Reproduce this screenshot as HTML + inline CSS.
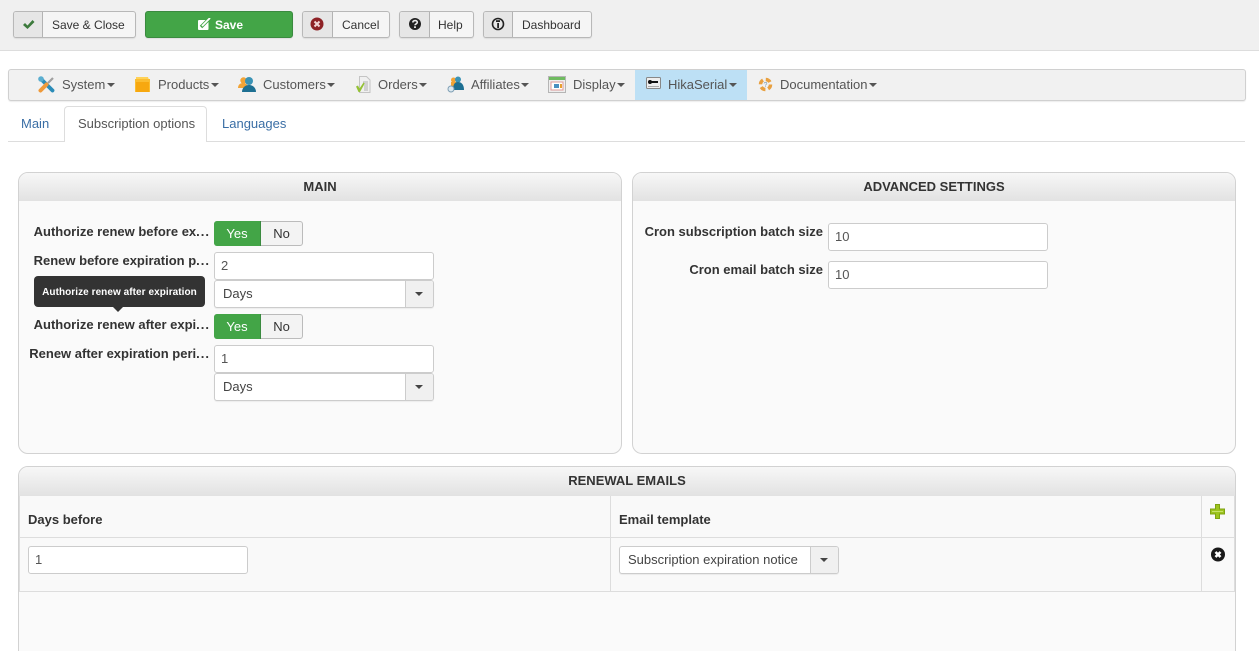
<!DOCTYPE html>
<html lang="en"><head><meta charset="utf-8"><title>Subscription options</title>
<style>
html,body{margin:0;padding:0;width:1259px;height:651px;overflow:hidden;background:#fff;font-family:"Liberation Sans",Arial,sans-serif;font-size:12px;color:#333}
#w{position:relative;width:1259px;height:651px;overflow:hidden;background:#fff}
.a{position:absolute;box-sizing:border-box}
.t{position:absolute;white-space:nowrap;line-height:16px}
.btn{position:absolute;box-sizing:border-box;top:11px;height:27px;background:#f5f5f5;border:1px solid #b8b8b8;border-radius:3px;box-shadow:0 1px 1px rgba(0,0,0,.08)}
.btn .ic{position:absolute;left:0;top:0;bottom:0;background:#e6e6e6;border-right:1px solid #b3b3b3;border-radius:2px 0 0 2px}
.btn .t{top:5px;color:#333}
.btn svg{position:absolute}
.m{position:absolute;top:77px;line-height:16px;font-size:13px;color:#555;white-space:nowrap}
.m i{display:inline-block;width:0;height:0;border:4px solid transparent;border-top-color:#555;border-bottom:0;margin-left:1.500px;vertical-align:2px}
.mi{position:absolute}
.panel{position:absolute;box-sizing:border-box;background:#fafafa;border:1px solid #d2d2d2;border-radius:10px}
.panel .h{position:absolute;left:0;right:0;top:0;height:28px;border-radius:9px 9px 0 0;background:linear-gradient(#f7f7f7,#e2e2e2);text-align:center;font-weight:bold;font-size:13px;line-height:27px;color:#333}
.l{position:absolute;white-space:nowrap;font-weight:bold;font-size:13px;line-height:16px;color:#333;text-align:right}
.l s{text-decoration:none;letter-spacing:1px;margin-right:-1px}
.inp{position:absolute;box-sizing:border-box;background:#fff;border:1px solid #ccc;border-radius:3px;width:220px;height:28px;padding:5px 6px;line-height:16px;color:#555;font-size:13px}
.sel{position:absolute;box-sizing:border-box;background:#fff;border:1px solid #ccc;border-radius:3px;width:220px;height:28px;padding:5px 8px;line-height:16px;color:#444;font-size:13px;box-shadow:0 1px 1px rgba(0,0,0,.06)}
.sel b{position:absolute;right:0;top:0;bottom:0;width:27px;background:#f0f0f0;border-left:1px solid #ccc;border-radius:0 2px 2px 0}
.sel b:after{content:"";position:absolute;left:9px;top:11px;border:4px solid transparent;border-top-color:#444;border-bottom:0}
.yn{position:absolute;box-sizing:border-box;left:214px;width:89px;height:25px;border:1px solid #bbb;border-radius:3px;background:#f3f3f3;font-size:13px;line-height:23px}
.yn span{position:absolute;top:0;text-align:center}
.yn .y{left:-1px;top:-1px;height:25px;line-height:25px;width:47px;background:#43a547;color:#fff;border-radius:3px 0 0 3px;border-right:1px solid #3a8a3f;box-sizing:border-box}
.yn .n{left:46px;width:41px;color:#333;line-height:25px;top:-1px}
</style></head><body><div id="w">

<div class="a" style="left:0;top:0;width:1259px;height:51px;background:#f0f0f0;border-bottom:1px solid #ddd"></div>

<div class="btn" style="left:13px;width:123px"><span class="ic" style="width:28px"><svg style="left:8px;top:7px" width="13" height="11" viewBox="0 0 13 11"><path d="M1 6l2-2 2.500 2.500L10.500 1 12.500 3 5.500 10z" fill="#3c7a3c"/></svg></span><span class="t" style="left:38px">Save &amp; Close</span></div>

<div class="btn" style="left:145px;width:148px;background:#43a547;border-color:#3a8a3f"><svg style="left:52px;top:6px" width="14" height="14" viewBox="0 0 14 14"><rect x="0" y="2" width="10.500" height="10" rx="1" fill="#fff"/><path d="M3 9 11.500 .5" stroke="#43a547" stroke-width="3.400" fill="none"/><path d="M4 8 12 0" stroke="#fff" stroke-width="1.800" fill="none"/></svg><span class="t" style="left:69px;color:#fff;font-weight:bold">Save</span></div>

<div class="btn" style="left:302px;width:88px"><span class="ic" style="width:29px"><svg style="left:7px;top:5px" width="14" height="14" viewBox="0 0 14 14"><circle cx="7" cy="7" r="6.500" fill="#8e2226"/><path d="M4.500 4.500l5 5M9.500 4.500l-5 5" stroke="#f3d6d6" stroke-width="2"/></svg></span><span class="t" style="left:39px">Cancel</span></div>

<div class="btn" style="left:399px;width:75px"><span class="ic" style="width:29px"><svg style="left:8px;top:5px" width="14" height="14" viewBox="0 0 14 14"><circle cx="7" cy="7" r="6" fill="#222"/><path d="M4.800 5.500C5 3 9.300 3 9.300 5.300 9.300 7 7 6.800 7 8.300" stroke="#eee" stroke-width="1.600" fill="none"/><rect x="6.100" y="9.300" width="1.800" height="1.700" fill="#eee"/></svg></span><span class="t" style="left:38px">Help</span></div>

<div class="btn" style="left:483px;width:109px"><span class="ic" style="width:28px"><svg style="left:7px;top:5px" width="14" height="14" viewBox="0 0 14 14"><circle cx="7" cy="7" r="5.500" fill="none" stroke="#222" stroke-width="1.600"/><rect x="6.200" y="6" width="1.800" height="5" fill="#222"/><rect x="5" y="3.200" width="4" height="1.800" fill="#222"/></svg></span><span class="t" style="left:38px">Dashboard</span></div>

<div class="a" style="left:8px;top:69px;width:1238px;height:32px;background:#f1f1f1;border:1px solid #d0d0d0;border-radius:3px;box-shadow:0 1px 1px rgba(0,0,0,.08)"></div>
<div class="a" style="left:635px;top:70px;width:112px;height:30px;background:#bde0f5"></div>

<svg class="mi" style="left:38px;top:76px" width="18" height="17" viewBox="0 0 18 17"><path d="M10 7 15 2" stroke="#a0a0a0" stroke-width="2.200" fill="none"/><path d="M3 3 14.500 14.500" stroke="#2b8cb8" stroke-width="3.800" stroke-linecap="round" fill="none"/><circle cx="3" cy="3" r="2.800" fill="#5aaed0"/><path d="M2.500 14.500 8.500 8.500" stroke="#ef9a3a" stroke-width="4" stroke-linecap="round" fill="none"/></svg>
<span class="m" style="left:62px">System<i></i></span>

<svg class="mi" style="left:134px;top:76px" width="17" height="16" viewBox="0 0 17 16"><path d="M2 1h12l1 3H2z" fill="#ffd257"/><rect x="1" y="3" width="15" height="13" fill="#fbbd30"/><rect x="2" y="6" width="13" height="10" fill="#f7a80f"/></svg>
<span class="m" style="left:158px">Products<i></i></span>

<svg class="mi" style="left:238px;top:76px" width="18" height="16" viewBox="0 0 18 16"><circle cx="5.500" cy="4.500" r="3.200" fill="#f2a436"/><path d="M0 12c0-3 2-5 5-5s5 2 5 5z" fill="#f2a436"/><circle cx="11" cy="5" r="4" fill="#3a93b5"/><path d="M4 16c0-4 3-7 7-7s7 3 7 7z" fill="#1d6f92"/></svg>
<span class="m" style="left:263px">Customers<i></i></span>

<svg class="mi" style="left:355px;top:76px" width="17" height="17" viewBox="0 0 17 17"><path d="M4.500 .5h7l3.500 3.500v12.500H4.500z" fill="#f0f0f0" stroke="#c4c4c4"/><path d="M8 6h5M8 8h5M9 10h4M9 12h4M9 14h4" stroke="#b0b0b0"/><path d="M1 10.500l2-1 1.500 3 4-6 1.200 1L5 16H3.500z" fill="#94c135"/></svg>
<span class="m" style="left:378px">Orders<i></i></span>

<svg class="mi" style="left:447px;top:76px" width="18" height="17" viewBox="0 0 18 17"><circle cx="6.500" cy="4" r="2.500" fill="#f2a436"/><rect x="4" y="6" width="6" height="6" fill="#f2a436"/><circle cx="11" cy="3.500" r="3" fill="#3a93b5"/><path d="M6 14c0-6 2-8 5-8s6 2 6 8z" fill="#1d6f92"/><circle cx="4" cy="13" r="3" fill="#dce8f0" stroke="#7f9fb4"/></svg>
<span class="m" style="left:471px">Affiliates<i></i></span>

<svg class="mi" style="left:548px;top:76px" width="18" height="17" viewBox="0 0 18 17"><rect x=".5" y=".5" width="17" height="16" fill="#eee" stroke="#b5b5b5"/><rect x="1" y="1" width="16" height="3" fill="#6fbb60"/><rect x="3" y="6" width="12" height="8" fill="#fff" stroke="#dc9898"/><rect x="6" y="8" width="5" height="4" fill="#4a8fc0"/><rect x="12" y="8" width="2" height="4" fill="#e8a030"/></svg>
<span class="m" style="left:573px">Display<i></i></span>

<svg class="mi" style="left:646px;top:77px" width="15" height="13" viewBox="0 0 15 13"><rect x=".5" y=".5" width="14" height="11" rx="1" fill="#eee" stroke="#888"/><circle cx="4" cy="5" r="2" fill="#111"/><rect x="4" y="4" width="8" height="2" fill="#111"/><rect x="2" y="9" width="11" height="1" fill="#aaa"/></svg>
<span class="m" style="left:668px">HikaSerial<i></i></span>

<svg class="mi" style="left:758px;top:77px" width="15" height="15" viewBox="0 0 15 15"><circle cx="7.500" cy="7.500" r="5" fill="none" stroke="#e8a040" stroke-width="3.500" stroke-dasharray="5 2.900"/><text x="5.500" y="10" font-size="7" fill="#7a9ab0" font-family="Liberation Sans">?</text></svg>
<span class="m" style="left:780px">Documentation<i></i></span>

<div class="a" style="left:8px;top:141px;width:1237px;height:1px;background:#ddd"></div>
<div class="a" style="left:64px;top:106px;width:143px;height:36px;background:#fff;border:1px solid #ddd;border-bottom:0;border-radius:4px 4px 0 0"></div>
<span class="t" style="left:21px;top:116px;color:#3a6ea5;font-size:13px">Main</span>
<span class="t" style="left:78px;top:116px;color:#555;font-size:13px">Subscription options</span>
<span class="t" style="left:222px;top:116px;color:#3a6ea5;font-size:13px">Languages</span>

<div class="panel" style="left:18px;top:172px;width:604px;height:282px"><div class="h">MAIN</div></div>
<div class="panel" style="left:632px;top:172px;width:604px;height:282px"><div class="h">ADVANCED SETTINGS</div></div>
<div class="panel" style="left:18px;top:466px;width:1218px;height:210px"><div class="h" style="height:29px">RENEWAL EMAILS</div></div>

<span class="l" style="right:1050px;top:224px">Authorize renew before ex<s>...</s></span>
<div class="yn" style="top:221px"><span class="y">Yes</span><span class="n">No</span></div>
<span class="l" style="right:1050px;top:253px">Renew before expiration p<s>...</s></span>
<div class="inp" style="left:214px;top:252px">2</div>
<div class="sel" style="left:214px;top:280px">Days<b></b></div>

<span class="l" style="right:1050px;top:317px">Authorize renew after expi<s>...</s></span>
<div class="yn" style="top:314px"><span class="y">Yes</span><span class="n">No</span></div>
<span class="l" style="right:1050px;top:346px">Renew after expiration peri<s>...</s></span>
<div class="inp" style="left:214px;top:345px">1</div>
<div class="sel" style="left:214px;top:373px">Days<b></b></div>

<div class="a" style="left:34px;top:276px;width:171px;height:31px;background:#333;border-radius:4px;color:#fff;font-size:10px;font-weight:bold;line-height:31px;letter-spacing:.06px;text-align:center;padding-top:1px">Authorize renew after expiration</div>
<div class="a" style="left:113px;top:307px;width:0;height:0;border:5px solid transparent;border-top-color:#333;border-bottom:0"></div>

<span class="l" style="right:436px;top:224px">Cron subscription batch size</span>
<div class="inp" style="left:828px;top:223px">10</div>
<span class="l" style="right:436px;top:262px">Cron email batch size</span>
<div class="inp" style="left:828px;top:261px">10</div>

<div class="a" style="left:19px;top:496px;width:1216px;height:96px;background:#f9f9f9;border-bottom:1px solid #ddd;border-left:1px solid #ddd;border-right:1px solid #ddd"></div>
<div class="a" style="left:19px;top:537px;width:1216px;height:1px;background:#ddd"></div>
<div class="a" style="left:610px;top:496px;width:1px;height:95px;background:#ddd"></div>
<div class="a" style="left:1201px;top:496px;width:1px;height:95px;background:#ddd"></div>
<span class="l" style="left:28px;top:512px">Days before</span>
<span class="l" style="left:619px;top:512px">Email template</span>
<svg class="mi" style="left:1209px;top:503px" width="17" height="18" viewBox="0 0 17 18"><path d="M6 1h5v4.500h5v6h-5V16H6v-4.500H1v-6h5z" fill="#9dc41f"/><path d="M6.500 1.500h4v4.500h5v5h-5v4.500h-4V11h-5V6h5z" fill="none" stroke="#7fa312"/><path d="M3 8.500h11" stroke="#c8e26a"/></svg>
<svg class="mi" style="left:1210px;top:546px" width="16" height="16" viewBox="0 0 16 16"><circle cx="8" cy="8.500" r="7" fill="#1a1a1a"/><path d="M5.500 6l5 5M10.500 6l-5 5" stroke="#fff" stroke-width="2.600"/></svg>
<div class="inp" style="left:28px;top:546px">1</div>
<div class="sel" style="left:619px;top:546px">Subscription expiration notice<b></b></div>

</div></body></html>
